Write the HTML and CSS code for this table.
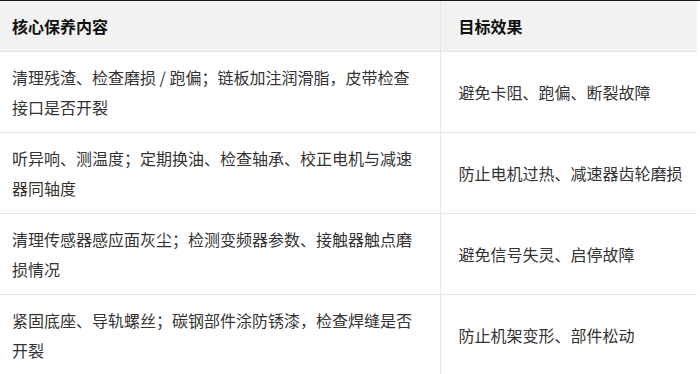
FILE: index.html
```html
<!DOCTYPE html>
<html lang="zh-CN">
<head>
<meta charset="utf-8">
<link rel="stylesheet" href="styles.css">
</head>
<body>
<div class="wrap">
<table class="tbl">
  <thead>
    <tr><th class="c1">核心保养内容</th><th class="c2">目标效果</th></tr>
  </thead>
  <tbody>
    <tr><td class="c1">清理残渣、检查磨损 / 跑偏；链板加注润滑脂，皮带检查接口是否开裂</td><td class="c2">避免卡阻、跑偏、断裂故障</td></tr>
    <tr><td class="c1">听异响、测温度；定期换油、检查轴承、校正电机与减速器同轴度</td><td class="c2">防止电机过热、减速器齿轮磨损</td></tr>
    <tr><td class="c1">清理传感器感应面灰尘；检测变频器参数、接触器触点磨损情况</td><td class="c2">避免信号失灵、启停故障</td></tr>
    <tr><td class="c1">紧固底座、导轨螺丝；碳钢部件涂防锈漆，检查焊缝是否开裂</td><td class="c2">防止机架变形、部件松动</td></tr>
  </tbody>
</table>
</div>
</body>
</html>
```
FILE: styles.css
```css
html, body {
  margin: 0;
  padding: 0;
  background: #fff;
}
.wrap {
  border-top: 1px solid #1a1a1a;
  width: 700px;
  height: 373px;
  overflow: hidden;
}
.tbl {
  width: 697px;
  border-collapse: collapse;
  table-layout: fixed;
  font-family: "Noto Sans CJK SC", "Noto Sans", sans-serif;
  font-size: 16px;
  line-height: 30px;
  color: #333;
}
.tbl th {
  background: #f2f2f2;
  color: #111;
  font-weight: bold;
  text-align: left;
  height: 50px;
  box-sizing: border-box;
}
.tbl th, .tbl td {
  padding: 10px 18px 10px 12px;
  vertical-align: middle;
  border-bottom: 1px solid #e6e6e6;
}
.tbl td {
  height: 80px;
  box-sizing: border-box;
}
.tbl .c1 {
  width: 440px;
  box-sizing: border-box;
}
.tbl .c2 {
  border-left: 1px solid #e6e6e6;
  padding-left: 18px;
  padding-right: 8px;
}
```
